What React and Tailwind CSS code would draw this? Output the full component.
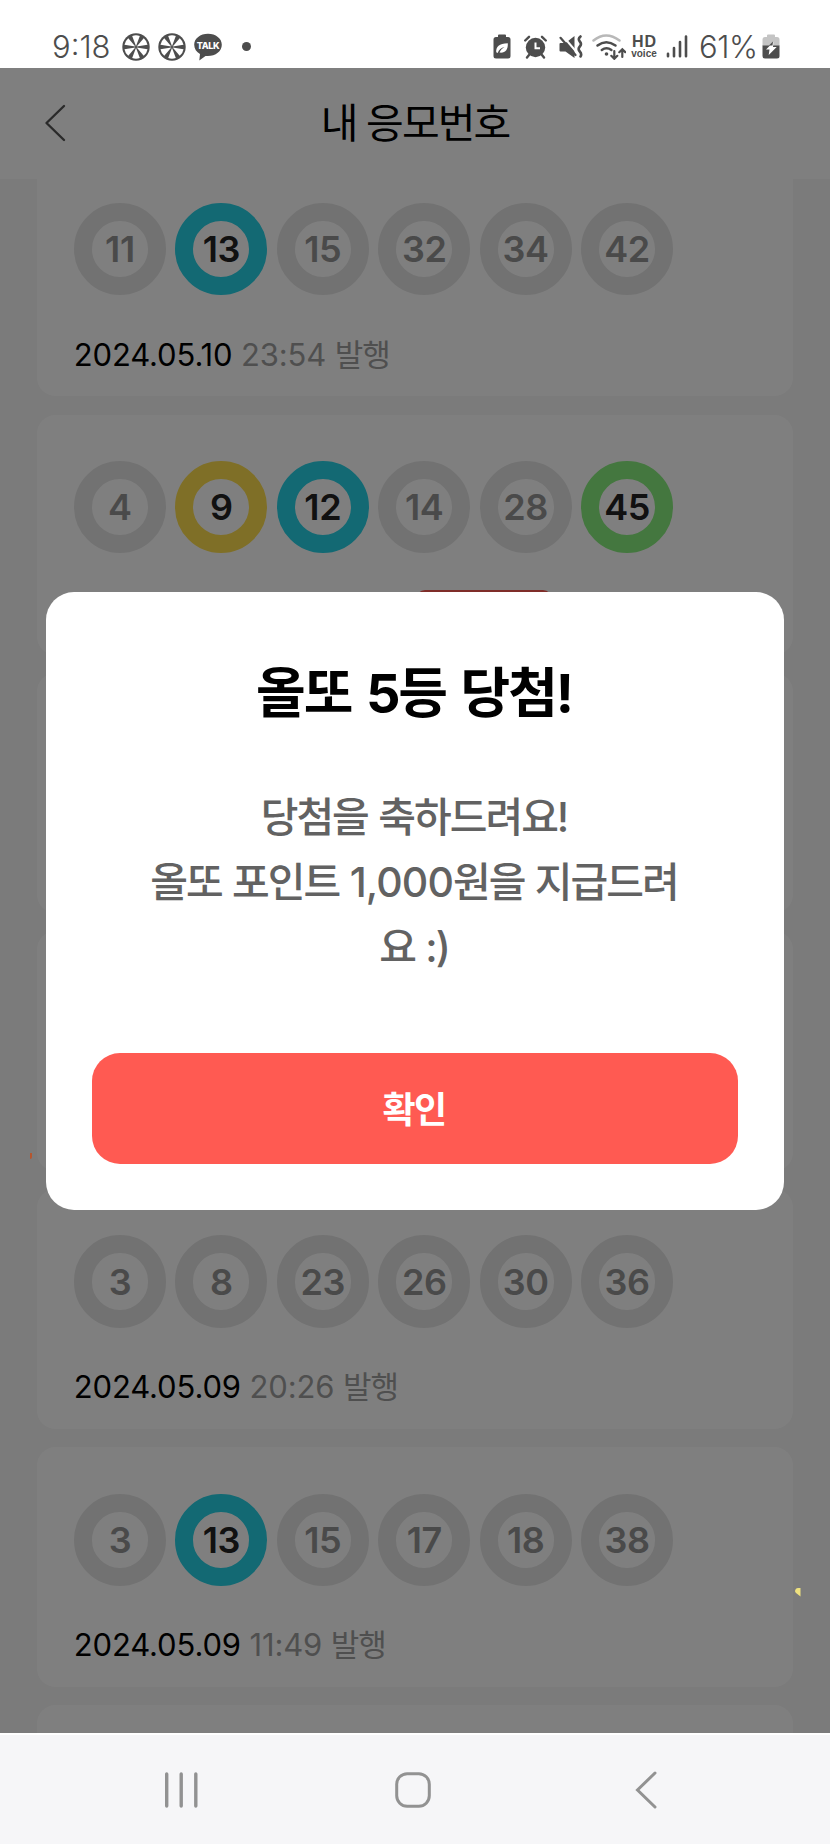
import React from "react";

const cards = [
  { id: 1, balls: [11, 13, 15, 32, 34, 42], hits: { 13: "blue" }, date: "2024.05.10", time: "23:54" },
  { id: 2, balls: [4, 9, 12, 14, 28, 45], hits: { 9: "yellow", 12: "blue", 45: "green" }, badge: true },
  { id: 3, balls: [] },
  { id: 4, balls: [] },
  { id: 5, balls: [3, 8, 23, 26, 30, 36], hits: {}, date: "2024.05.09", time: "20:26" },
  { id: 6, balls: [3, 13, 15, 17, 18, 38], hits: { 13: "blue" }, date: "2024.05.09", time: "11:49" },
  { id: 7, balls: [] },
];

const ringColors = {
  blue: "border-[#26d2e6] text-[#222]",
  yellow: "border-[#ffde4e] text-[#222]",
  green: "border-[#88ee7e] text-[#222]",
  none: "border-[#e5e5e5] text-[#949494]",
};

function WheelIcon({ className }) {
  return (
    <svg viewBox="0 0 28 28" className={"size-7 shrink-0 " + className}>
      <circle cx="14" cy="14" r="13.7" fill="#4d4d4d" />
      <g fill="#fff">
        {[0, 60, 120, 180, 240, 300].map((deg) => (
          <path key={deg} d="M14 13.200 L10.200 2.900 Q14 1.500 17.800 2.900 Z" transform={`rotate(${deg} 14 14)`} />
        ))}
      </g>
    </svg>
  );
}

function TalkIcon({ className }) {
  return (
    <svg viewBox="0 0 28 28" className={"size-7 shrink-0 " + className}>
      <path d="M14 .8C6.3.8.2 5.6.2 11.7c0 4 2.3 7.3 5.8 9.3L5.3 27.6l6.2-4.7c9 1 16.3-4.200 16.300-11.200C27.800 5.600 21.700.8 14 .8Z" fill="#4d4d4d" />
      <text x="14" y="15.500" textAnchor="middle" fontSize="9" fontWeight="800" letterSpacing="-0.400" fill="#fff" fontFamily="Inter, sans-serif">TALK</text>
    </svg>
  );
}

function StatusBar() {
  return (
    <div className="flex h-[68px] shrink-0 items-center bg-white pt-[25px] text-[#4d4d4d]">
      <span className="ml-[52px] w-[58px] text-[31px] leading-none font-[350] whitespace-nowrap">9:18</span>
      <WheelIcon className="ml-3" />
      <WheelIcon className="ml-2" />
      <TalkIcon className="ml-2" />
      <span className="ml-5 size-[9px] rounded-full bg-[#4d4d4d]" />

      {/* power saving */}
      <svg viewBox="0 0 18 25" className="ml-auto h-[25px] w-[18px] shrink-0">
        <path d="M5 3V1.500Q5 .5 6 .5h6q1 0 1 1V3h2q2.500 0 2.500 2.500v16.500q0 2.500-2.500 2.500H3Q.5 24.500.5 22V5.500Q.5 3 3 3Z" fill="#4d4d4d" />
        <path d="M3.200 18.200C3 12.800 6 9.500 14.800 9.300c.4 6.500-2.600 10-8.300 9.300 1.400-3.200 3-4.400 5-5.600-3.200.8-5.700 2.700-6.800 5.900Z" fill="#fff" />
      </svg>
      {/* alarm */}
      <svg viewBox="0 0 23 24" className="ml-[13px] h-6 w-[23px] shrink-0">
        <circle cx="11.500" cy="12.500" r="9.700" fill="#4d4d4d" />
        <path d="M1.200 5.500 5 1.800M21.800 5.500 18 1.800M5 20l-2 2.500M18 20l2 2.500" stroke="#4d4d4d" strokeWidth="2.400" strokeLinecap="round" />
        <path d="M11.500 7.500v5.800h4.500" fill="none" stroke="#fff" strokeWidth="2" />
      </svg>
      {/* vibrate */}
      <svg viewBox="0 0 24 24" className="ml-3 h-6 w-6 shrink-0">
        <path d="M1.500 8h5L15.500 1v22l-9-6.500h-5Q.5 16.500.5 15.500V9q0-1 1-1Z" fill="#4d4d4d" />
        <path d="M3 0 17.500 17" stroke="#fff" strokeWidth="2" />
        <path d="M1.500 2.800 16.500 20" stroke="#4d4d4d" strokeWidth="2.200" strokeLinecap="round" />
        <path d="M21.500 1.500q-3 2.500-.7 5t0 5 0 5 .7 5" fill="none" stroke="#4d4d4d" strokeWidth="2.600" strokeLinecap="round" />
      </svg>
      {/* wifi */}
      <svg viewBox="0 0 34 26" className="ml-[9px] h-[26px] w-[34px] shrink-0" fill="none" strokeLinecap="round">
        <path d="M1.500 6.500Q14-3.500 27.500 6.500" stroke="#b8b8b8" strokeWidth="2.500" />
        <path d="M5.500 11.500q8.700-6.500 18 0M9.800 16q4.700-3.500 9.600 0" stroke="#4d4d4d" strokeWidth="2.500" />
        <circle cx="14.500" cy="20" r="1.800" fill="#4d4d4d" />
        <path d="M22.300 17v7.500m-3-2.700 3 3 3-3M30.300 23v-7.500m-3 2.700 3-3 3 3" stroke="#4d4d4d" strokeWidth="2.200" />
      </svg>
      <span className="ml-[5px] flex w-[26px] shrink-0 flex-col items-center">
        <span className="-mr-[1px] font-['Liberation_Sans',sans-serif] text-[16px] leading-[14px] font-bold tracking-[1px]">HD</span>
        <span className="font-['Liberation_Sans',sans-serif] text-[10px] leading-[10px] font-bold">voice</span>
      </span>
      {/* signal */}
      <svg viewBox="0 0 22 23" className="ml-[9px] h-[23px] w-[22px] shrink-0 stroke-[#4d4d4d]" strokeWidth="2.600" strokeLinecap="round">
        <path d="M2 18.800v2.500M8 13v8.300M14 7v14.300M20 1.500v19.800" />
      </svg>
      <span className="ml-[11px] w-[58px] text-[31px] leading-none font-[350] tracking-[-0.400px] whitespace-nowrap">61%</span>
      {/* battery */}
      <svg viewBox="0 0 18 25" className="mr-[50px] ml-[5px] h-[25px] w-[18px] shrink-0">
        <path d="M5 3V1.500Q5 .5 6 .5h6q1 0 1 1V3h2q2.500 0 2.500 2.500V12H.5V5.500Q.5 3 3 3Z" fill="#c4c4c4" />
        <path d="M.5 11.500h17V22q0 2.500-2.500 2.500H3Q.5 24.500.5 22Z" fill="#4d4d4d" />
        <path d="M11.500 8 4 15.500h3.500l-.8 5.500 8-8h-3.700Z" fill="#fff" />
        <path d="M11 7.500 7 11.500h3.500Z" fill="#4d4d4d" />
      </svg>
    </div>
  );
}

function Header() {
  return (
    <header className="relative z-10 flex h-[111px] shrink-0 items-center justify-center bg-white">
      <svg viewBox="0 0 22 38" className="absolute top-[36px] left-[44px] h-[38px] w-[22px]">
        <path d="M20 2 2.500 19 20 36" fill="none" stroke="#555" strokeWidth="2.400" strokeLinecap="round" strokeLinejoin="round" />
      </svg>
      <h1 className="text-[41px] leading-none tracking-[-1.900px] text-black">내 응모번호</h1>
    </header>
  );
}

function Card({ card }) {
  return (
    <div className="h-[239.700px] shrink-0 rounded-[18.400px] bg-white px-[36.900px] pt-[46.200px]">
      <div className="flex gap-[9.200px]">
        {card.balls.map((n) => (
          <div
            key={n}
            className={"flex size-[92.250px] items-center justify-center rounded-full border-[18.400px] text-[36px] leading-none font-semibold tracking-[-0.400px] " + ringColors[card.hits[n] || "none"]}
          >
            {n}
          </div>
        ))}
      </div>
      {card.date && (
        <p className="mt-[36.500px] text-[31px] leading-[46px] tracking-[-0.140px] whitespace-nowrap text-black">
          {card.date} <span className="text-[#9f9f9f]">{card.time} <span className="tracking-[-1px]">발행</span></span>
        </p>
      )}
      {card.badge && <div className="mt-[37px] ml-[342px] h-[46px] w-[136px] rounded-[9px] bg-[#ff5a52]" />}
    </div>
  );
}

function Popup() {
  return (
    <div className="absolute inset-0 z-20 flex items-center justify-center bg-black/50">
      <div className="flex h-[618px] w-[738px] flex-col items-center rounded-[28px] bg-white px-[46px] pb-[46px]">
        <h2 className="mt-[67px] mr-[2px] text-[54px] leading-[70px] font-bold tracking-[-2.100px] whitespace-nowrap text-black [word-spacing:4px]">올또 5등 당첨!</h2>
        <p className="mt-[56px] mr-[2px] text-center text-[41px] leading-[65px] font-medium tracking-[-2px] whitespace-nowrap text-[#626262] [word-spacing:1.500px]">
          당첨을 축하드려요!
          <br />
          올또 포인트 <span className="tracking-[-0.900px]">1,000</span>원을 지급드려
          <br />
          요 :)
        </p>
        <button className="mt-auto h-[110.500px] w-full rounded-[28px] bg-[#ff5a52] pt-[3px] pr-[2px] text-[36px] font-bold tracking-[-1.500px] text-white">확인</button>
      </div>
      {/* confetti */}
      <span className="absolute top-[1085px] left-[30px] h-[6px] w-[2px] rounded-br-full bg-[#b5562f]" />
      <svg viewBox="0 0 6 9" className="absolute top-[1520px] left-[795px] h-[9px] w-[6px]">
        <path d="M0 3Q.5 0 3 0h2.500v8.500L1 5Q0 4 0 3Z" fill="#eee17f" />
      </svg>
    </div>
  );
}

function NavBar() {
  return (
    <nav className="flex h-[111px] shrink-0 items-center border-t-2 border-white bg-[#f6f6f8]">
      <svg viewBox="0 0 34 36" className="ml-[164px] h-9 w-[34px]" stroke="#929292" strokeWidth="3.400" strokeLinecap="round">
        <path d="M2.700 2v32M17.200 2v32M31.800 2v32" />
      </svg>
      <svg viewBox="0 0 36 36" className="ml-[197px] size-9">
        <rect x="1.700" y="1.700" width="32.600" height="32.600" rx="10.500" fill="none" stroke="#929292" strokeWidth="3" />
      </svg>
      <svg viewBox="0 0 22 38" className="ml-[204px] h-[38px] w-[22px]">
        <path d="M20 2 2.500 19 20 36" fill="none" stroke="#929292" strokeWidth="3" strokeLinecap="round" strokeLinejoin="miter" />
      </svg>
    </nav>
  );
}

export default function App() {
  return (
    <div className="flex h-[1844px] w-[830px] flex-col overflow-hidden bg-white font-['Inter','Noto_Sans_CJK_KR',sans-serif]">
      <StatusBar />
      <div className="relative flex h-[1665px] shrink-0 flex-col overflow-hidden">
        <Header />
        <main className="min-h-0 flex-1 bg-[#f6f6f6] px-[36.900px]">
          <div className="-mt-[22.300px] flex flex-col gap-[18.450px]">
            {cards.map((card) => (
              <Card key={card.id} card={card} />
            ))}
          </div>
        </main>
        <Popup />
      </div>
      <NavBar />
    </div>
  );
}
